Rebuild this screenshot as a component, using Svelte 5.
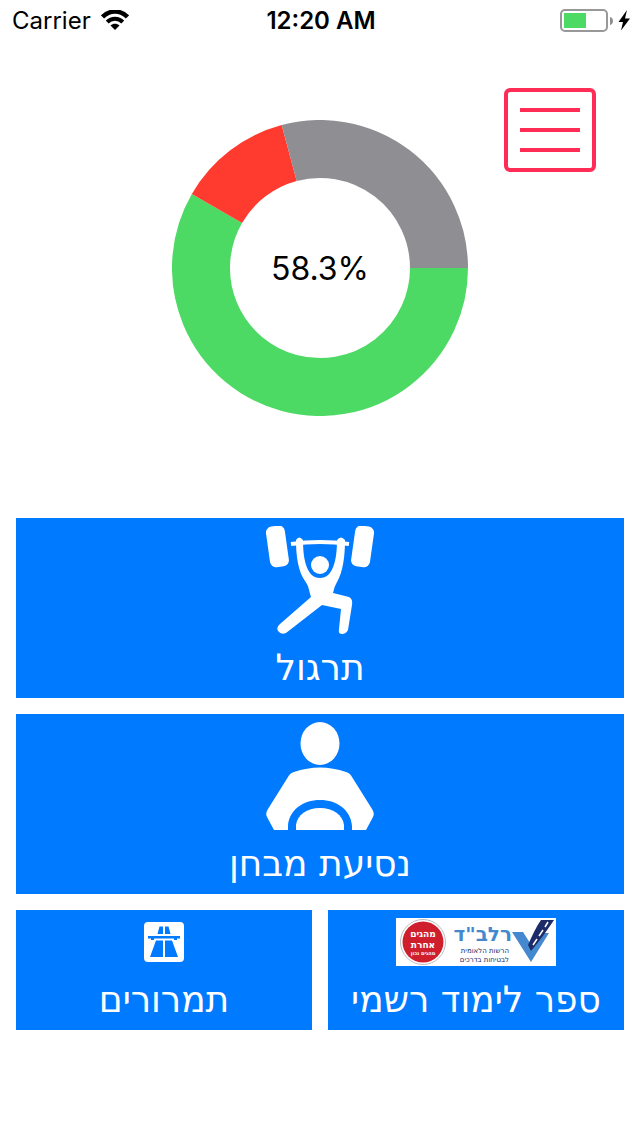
<script lang="ts">
	type Slice = { name: string; color: string; from: number; to: number };

	const slices: Slice[] = [
		{ name: 'correct', color: '#4cd964', from: 0, to: 210 },
		{ name: 'wrong', color: '#ff3b30', from: 210, to: 255 },
		{ name: 'unanswered', color: '#8e8e93', from: 255, to: 360 }
	];

	const score = 58.3;

	function point(deg: number) {
		const a = (deg * Math.PI) / 180;
		return `${148 + 119 * Math.cos(a)} ${148 + 119 * Math.sin(a)}`;
	}

	function arc({ from, to }: Slice) {
		return `M${point(from)}A119 119 0 ${to - from > 180 ? 1 : 0} 1 ${point(to)}`;
	}
</script>

<div class="status">
	<div class="network">
		<span>Carrier</span>
		<svg width="28" height="20" viewBox="0 0 28 20" aria-hidden="true">
			<path d="M1.500 7C8.500-.3 19.500-.3 26.500 7" fill="none" stroke="#000" stroke-width="4.500" />
			<path d="M6.200 12C10.500 7.700 17.500 7.700 21.800 12" fill="none" stroke="#000" stroke-width="4" />
			<path d="M9.500 15.500C12 13.200 16 13.200 18.500 15.500L14 20z" />
		</svg>
	</div>
	<time>12:20 AM</time>
	<div class="power">
		<svg width="70" height="24" viewBox="0 0 70 24" aria-hidden="true">
			<rect x="1" y="2" width="46" height="21" rx="4" fill="none" stroke="#98989a" stroke-width="2" />
			<rect x="4" y="5" width="22" height="15" fill="#4cd964" />
			<path d="M50 9c4 1 4 7 0 8z" fill="#8e8e93" />
			<path d="M67 2L58.500 14H63L61 22.500L70 10.500H65z" />
		</svg>
	</div>
</div>

<main dir="rtl">
	<section class="summary" dir="ltr">
		<div class="chart">
			<svg viewBox="0 0 296 296" aria-hidden="true">
				{#each slices as slice (slice.name)}
					<path d={arc(slice)} fill="none" stroke={slice.color} stroke-width="58" />
				{/each}
			</svg>
			<span class="score">{score}%</span>
		</div>
		<button class="menu" aria-label="תפריט">
			<svg width="60" height="44" viewBox="0 0 60 44" aria-hidden="true">
				<path d="M0 2H60M0 22H60M0 42H60" stroke="#ff2d55" stroke-width="4" />
			</svg>
		</button>
	</section>

	<nav>
		<button class="tile wide">
			<svg width="108" height="108" viewBox="0 0 108 108" fill="#fff" aria-hidden="true">
				<rect x="2" y="0" width="19" height="41" rx="6" transform="rotate(-8 11 21)" />
				<rect x="87" y="0" width="19" height="41" rx="6" transform="rotate(8 97 21)" />
				<path d="M25 18Q54 14 83 18" fill="none" stroke="#fff" stroke-width="4" />
				<circle cx="54" cy="39" r="9" />
				<path d="M30 14Q33 9 37 14C37 34 41 52 54 52C67 52 71 34 71 14Q75 9 79 14C79 30 77 46 71 56Q68 61 67 67L83 71Q87 73 86 79L82 104Q80 108 76 108Q72 108 73 103L75 83L56 79L20 107Q15 109 12 105Q10 101 14 98L45 71C43 65 43 60 39 55C32 45 30 30 30 14z" />
			</svg>
			<span>תרגול</span>
		</button>

		<button class="tile wide">
			<svg width="108" height="108" viewBox="0 0 108 108" fill="#fff" aria-hidden="true">
				<ellipse cx="54" cy="21.500" rx="19.500" ry="21.500" />
				<path d="M8 108L1 95Q-1 91 2 87L22 55Q24 51 28 50Q54 41 80 50Q84 51 86 55L106 87Q109 91 107 95L100 108H86V104C85 88 71 78 54 78C37 78 23 88 22 104V108z" />
				<path d="M30 108V103C31 93 41 86 54 86C67 86 77 93 78 103V108z" />
			</svg>
			<span>נסיעת מבחן</span>
		</button>

		<button class="tile">
			<svg width="160" height="48" viewBox="0 0 160 48" direction="rtl" aria-hidden="true">
				<rect width="160" height="48" fill="#fff" />
				<circle cx="27" cy="24" r="22.500" fill="#fff" stroke="#b9bcc0" />
				<circle cx="27" cy="24" r="20.500" fill="#cf1f2c" />
				<g fill="#fff" font-weight="700" text-anchor="middle">
					<text x="27" y="19" font-size="9">מהגים</text>
					<text x="27" y="30" font-size="9">אחרת</text>
					<text x="27" y="37" font-size="5">מהגים נכון</text>
				</g>
				<text x="116" y="23" font-size="20" font-weight="700" fill="#4489cf">רלב"ד</text>
				<g fill="#1c2c68">
					<text x="113" y="35" font-size="7">הרשות הלאומית</text>
					<text x="113" y="44" font-size="7">לבטיחות בדרכים</text>
				</g>
				<path d="M116 14H127L136 28L148 15H153L135 44z" fill="#4489cf" />
				<path d="M135 33L132 27C136 18 140 9 145 2H158C151 12 144 23 135 33z" fill="#1c2c68" />
				<path d="M152 4L149 9M147 12L143 18M141 21L137 27" stroke="#fff" stroke-width="1.500" />
			</svg>
			<span>ספר לימוד רשמי</span>
		</button>

		<button class="tile">
			<svg class="road" width="40" height="40" viewBox="0 0 40 40" aria-hidden="true">
				<rect width="40" height="40" rx="4" fill="#fff" />
				<g fill="#007aff">
					<path d="M15.500 4.500H19V12H13.500zM21 4.500H24.500L26.500 12H21z" />
					<path d="M4 14H36V16.500H33V18H30V16.500H10V18H7V16.500H4z" />
					<path d="M12 18.500H19V35H6zM21 18.500H28L34 35H21z" />
				</g>
			</svg>
			<span>תמרורים</span>
		</button>
	</nav>
</main>

<style>
	:global(body) {
		margin: 0;
		background: #fff;
	}
	.status,
	main {
		font-family: Inter, 'Liberation Sans', sans-serif;
		color: #000;
	}
	.status {
		display: grid;
		grid-template-columns: 1fr auto 1fr;
		align-items: center;
		height: 40px;
		padding: 0 10px 0 12px;
		font-size: 24px;
	}
	.network {
		display: flex;
		align-items: center;
		gap: 10px;
	}
	time {
		font-weight: 600;
	}
	.power {
		display: flex;
		justify-content: flex-end;
	}
	.summary {
		display: grid;
		grid-template-columns: 1fr 296px 1fr;
		align-items: start;
		padding: 48px 44px 102px;
	}
	.chart {
		display: grid;
		place-items: center;
		grid-column: 2;
		margin-top: 32px;
	}
	.chart > * {
		grid-area: 1 / 1;
	}
	.chart svg {
		width: 100%;
	}
	.score {
		font-size: 32px;
	}
	svg {
		display: block;
		flex: none;
	}
	button {
		border: 0;
		padding: 0;
		font: inherit;
		cursor: pointer;
	}
	.menu {
		display: grid;
		place-items: center;
		justify-self: end;
		width: 92px;
		height: 84px;
		border: 4px solid #ff2d55;
		border-radius: 6px;
		background: none;
	}
	nav {
		display: grid;
		grid-template-columns: 1fr 1fr;
		gap: 16px;
		padding: 0 16px 16px;
	}
	.tile {
		display: flex;
		flex-direction: column;
		align-items: center;
		gap: 4px;
		padding: 8px 0 0;
		background: #007aff;
		color: #fff;
		font-family: 'DejaVu Sans', 'Liberation Sans', sans-serif;
		font-size: 36px;
		line-height: 60px;
	}
	.tile svg {
		line-height: 1;
	}
	.wide {
		grid-column: 1 / -1;
	}
	.road {
		margin: 4px 0;
	}
</style>
